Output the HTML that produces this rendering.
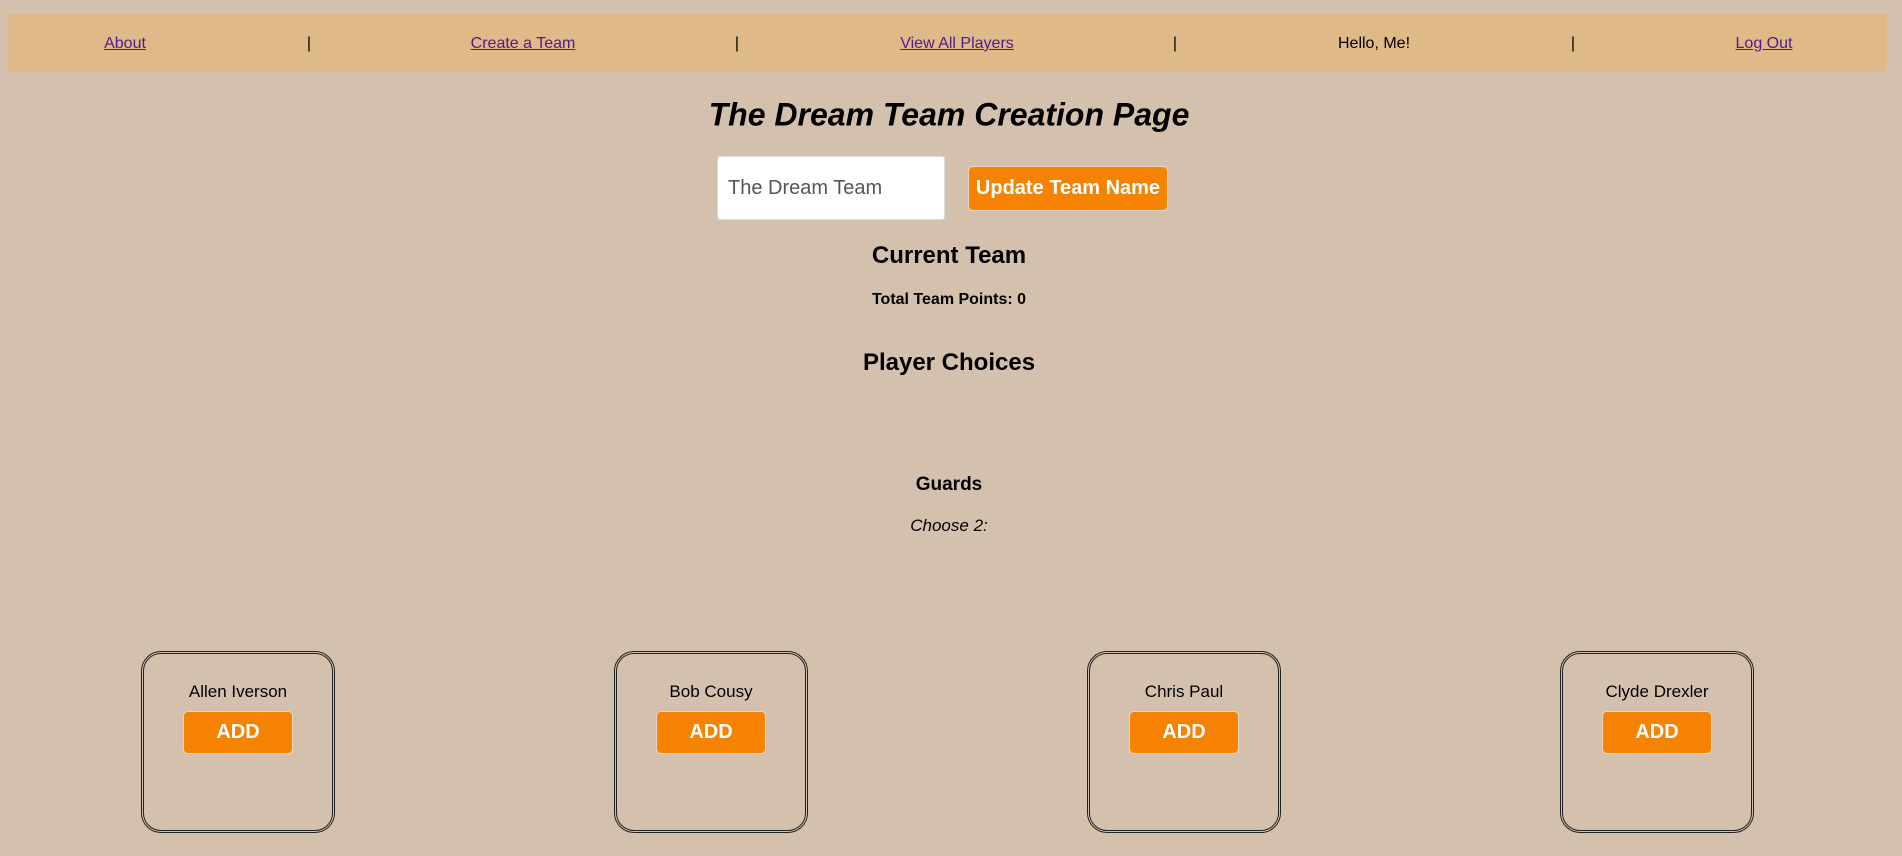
<!DOCTYPE html>
<html><head><style>
body{margin:0;width:1902px;height:856px;background:#d4c1ad;font-family:"Liberation Sans",Arial,sans-serif;position:relative;overflow:hidden;color:#000}
.a{position:absolute;white-space:nowrap}
.c{transform:translate(-50%,-50%)}
nav{position:absolute;left:8px;top:14px;width:1879px;height:57px;background:#dfb987}
nav span{position:absolute;top:30px;transform:translate(-50%,-50%);font-size:16px}
nav a{color:#551a8b;text-decoration:underline}
.btn{background:#f58200;color:#fff;font-weight:bold;border:1px solid #e6d6c6;border-radius:5px;display:flex;align-items:center;justify-content:center;box-sizing:border-box}
.card{position:absolute;top:651px;width:194px;height:182px;border:3px double #222;border-radius:20px;box-sizing:border-box}
</style></head><body>
<nav>
<span style="left:117px"><a>About</a></span>
<span style="left:301px">|</span>
<span style="left:515px"><a>Create a Team</a></span>
<span style="left:729px">|</span>
<span style="left:949px"><a>View All Players</a></span>
<span style="left:1167px">|</span>
<span style="left:1366px">Hello, Me!</span>
<span style="left:1565px">|</span>
<span style="left:1756px"><a>Log Out</a></span>
</nav>
<div class="a c" style="left:949px;top:115px;font-size:32px;font-weight:bold;font-style:italic">The Dream Team Creation Page</div>
<div class="a" style="left:717px;top:156px;width:228px;height:64px;background:#fff;border:1px solid #ddd;border-radius:3px;box-sizing:border-box;padding-left:10px;line-height:62px;font-size:20px;color:#555">The Dream Team</div>
<div class="a btn" style="left:968px;top:166px;width:200px;height:45px;font-size:20px">Update Team Name</div>
<div class="a c" style="left:949px;top:256px;font-size:24px;font-weight:bold">Current Team</div>
<div class="a c" style="left:949px;top:300px;font-size:16px;font-weight:bold">Total Team Points: 0</div>
<div class="a c" style="left:949px;top:363px;font-size:24px;font-weight:bold">Player Choices</div>
<div class="a c" style="left:949px;top:485px;font-size:19px;font-weight:bold">Guards</div>
<div class="a c" style="left:949px;top:526px;font-size:17px;font-style:italic">Choose 2:</div>

<div class="card" style="left:141px"></div>
<div class="card" style="left:614px"></div>
<div class="card" style="left:1087px"></div>
<div class="card" style="left:1560px"></div>

<div class="a c" style="left:238px;top:692px;font-size:17px">Allen Iverson</div>
<div class="a c" style="left:711px;top:692px;font-size:17px">Bob Cousy</div>
<div class="a c" style="left:1184px;top:692px;font-size:17px">Chris Paul</div>
<div class="a c" style="left:1657px;top:692px;font-size:17px">Clyde Drexler</div>

<div class="a btn" style="left:183px;top:711px;width:110px;height:43px;font-size:20px">ADD</div>
<div class="a btn" style="left:656px;top:711px;width:110px;height:43px;font-size:20px">ADD</div>
<div class="a btn" style="left:1129px;top:711px;width:110px;height:43px;font-size:20px">ADD</div>
<div class="a btn" style="left:1602px;top:711px;width:110px;height:43px;font-size:20px">ADD</div>
</body></html>
